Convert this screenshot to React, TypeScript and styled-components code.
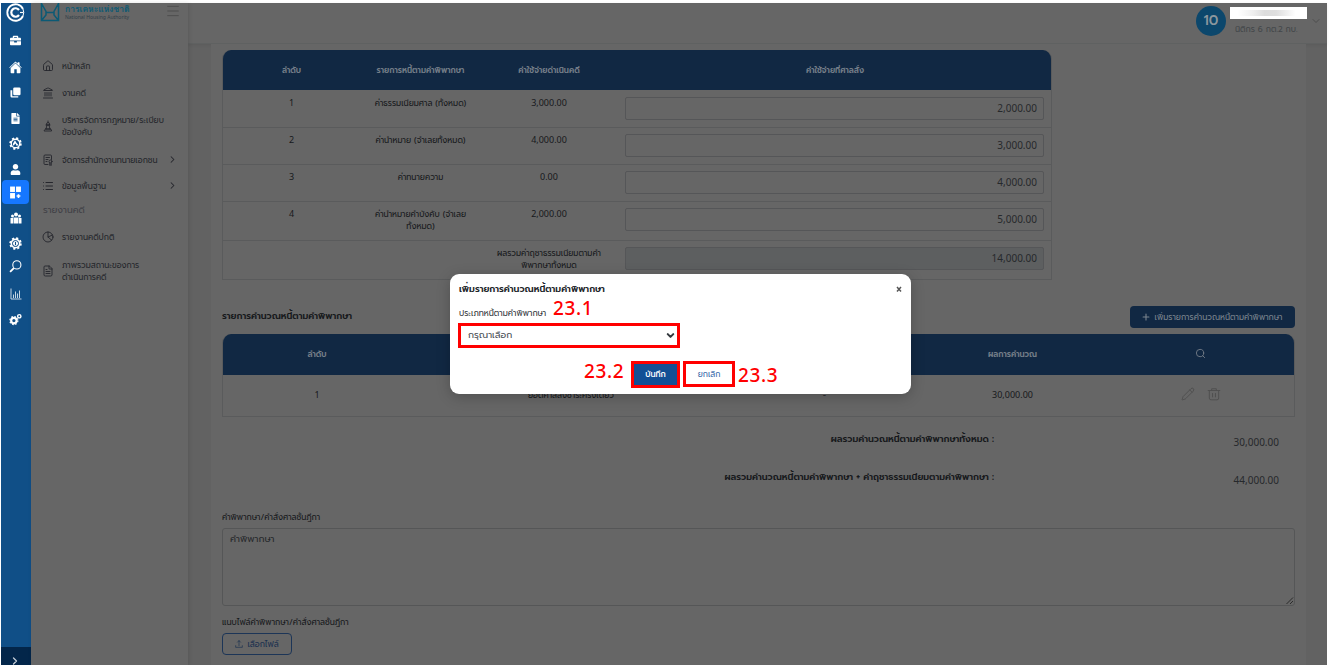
import React from 'react';
import styled, { createGlobalStyle, css } from 'styled-components';
import { FaBriefcase, FaFileAlt, FaUser } from 'react-icons/fa';
import { IoHome } from 'react-icons/io5';
import {
  House, Landmark, List, ChevronRight, ChevronDown, Search, Plus, Pencil,
  FileText, Menu,
} from 'lucide-react';

const Global = createGlobalStyle`
  * { box-sizing: border-box; }
  body { margin: 0; background: #fff; overflow: hidden;
    font-family: Prompt, Kanit, "Noto Sans", "Noto Sans Thai", sans-serif; }
`;

const digits = css`font-family: "Noto Sans", sans-serif;`;

const Page = styled.div`
  position: relative;
  display: flex;
  width: 1329px;
  height: 665px;
  padding: 3px 2px 0 1px;
  overflow: hidden;
`;

/* Rail */
const Rail = styled.nav`
  display: flex;
  flex-direction: column;
  align-items: flex-start;
  width: 30px;
  background: #104f87;
  color: #fff;
  flex: none;
`;
const RailItem = styled.div<{ $h?: number; $active?: boolean }>`
  display: flex;
  align-items: center;
  justify-content: center;
  width: 27px;
  margin-left: 1px;
  height: ${p => p.$h ?? 25.3}px;
  flex: none;
  border-radius: 4px;
  background: ${p => (p.$active ? '#1677ff' : 'transparent')};
`;
const RailToggle = styled.div`
  display: flex;
  justify-content: center;
  align-items: flex-end;
  width: 30px;
  height: 18px;
  margin-top: auto;
  padding-right: 2px;
  background: #03264a;
  color: #c3ccd6;
  overflow: hidden;
  svg { flex: none; margin-bottom: -2px; }
`;

/* Sidebar */
const Sidebar = styled.aside`
  width: 157px;
  flex: none;
  background: #666;
  box-shadow: 1px 0 4px rgba(0, 0, 0, 0.12);
  color: #25262c;
  z-index: 1;
`;
const Brand = styled.div`
  display: flex;
  height: 47px;
  padding: 0 7px 0 9px;
`;
const BrandText = styled.div`
  margin-left: 5px;
  flex: 1;
`;
const BrandThai = styled.div`
  font-family: "Noto Sans", Loma, "Noto Sans Thai Looped", sans-serif;
  font-size: 8.5px;
  line-height: 11px;
  font-weight: 600;
  color: #0b5a75;
  white-space: nowrap;
`;
const BrandEn = styled.div`
  font: 5px/6px "Noto Sans", sans-serif;
  color: #323f49;
  white-space: nowrap;
`;
const Item = styled.div<{ $h: number }>`
  display: flex;
  align-items: center;
  height: ${p => p.$h}px;
  padding: 0 10px 0 11px;
  svg { flex: none; }
`;
const ItemLabel = styled.span`
  flex: 1;
  margin-left: 8px;
  font-size: 8.05px;
  line-height: 12px;
  white-space: pre;
`;
const Section = styled.div`
  height: 21px;
  padding-left: 12px;
  font-size: 9.2px;
  line-height: 21px;
  color: #414147;
`;

/* Main area */
const Main = styled.main`
  flex: 1;
  display: flex;
  flex-direction: column;
  background: #626262;
  min-width: 0;
`;
const TopBar = styled.header`
  display: flex;
  justify-content: flex-end;
  height: 41px;
  flex: none;
  padding: 3px 5px 0 0;
  background: #666;
  border-bottom: 1px solid #5f6161;
  box-shadow: 0 1px 3px rgba(0, 0, 0, 0.08);
`;
const Avatar = styled.div`
  width: 30px;
  height: 30px;
  border-radius: 50%;
  background: #0c476c;
  color: #8c979e;
  font-size: 14px;
  font-weight: 500;
  line-height: 30px;
  text-align: center;
`;
const UserBox = styled.div`
  width: 77px;
  margin-left: 4px;
  padding-top: 1px;
`;
const Redacted = styled.div`
  height: 12px;
  background: linear-gradient(90deg, #fff 10%, #eee 30%, #dcdcdc 45%, #dedede 60%, #f1f1f1 75%, #fff 85%);
  background-size: 100% 6px;
  background-repeat: no-repeat;
  background-position: 0 3px;
  background-color: #fff;
`;
const Role = styled.div`
  padding-left: 5px;
  font-size: 8.1px;
  line-height: 20px;
  color: #43464a;
  white-space: nowrap;
`;
const UserArrow = styled.div`
  margin: 9px 0 0 3px;
  color: #4b4b4b;
  svg { display: block; }
`;

const Panel = styled.section`
  flex: 1;
  width: 1095px;
  margin-left: 23px;
  padding: 6px 11px 0;
  background: #666;
  color: #17191c;
`;

const cols1 = '139px 119px 138px 1fr';
const cols2 = '190px 318px 189px 187px 1fr';

const Table = styled.div<{ $w: number }>`
  width: ${p => p.$w}px;
  border: 1px solid #5a5b5c;
  border-top: 0;
  border-radius: 9px 9px 0 0;
  overflow: hidden;
`;
const Head = styled.div<{ $cols: string; $h: number }>`
  display: grid;
  grid-template-columns: ${p => p.$cols};
  align-items: center;
  height: ${p => p.$h}px;
  margin: 0 -1px;
  padding-bottom: 1px;
  background: #112843;
  color: #747d88;
  font-size: 8px;
  font-weight: 600;
  text-align: center;
  svg { display: block; margin: -2px auto 0; }
`;
const Row = styled.div<{ $cols: string; $h: number; $middle?: boolean }>`
  display: grid;
  grid-template-columns: ${p => p.$cols};
  height: ${p => p.$h}px;
  margin: 0 -1px;
  font-size: 8.1px;
  line-height: 12px;
  text-align: center;
  & + & { border-top: 1px solid #5a5b5c; }
  ${p => p.$middle && css`align-items: center; padding-bottom: 2px;`}
`;
const Cell = styled.div<{ $num?: boolean }>`
  padding-top: 7px;
  white-space: pre;
  ${Row} + ${Row} > & { padding-top: 6px; }
  ${p => p.$num && css`${digits} font-size: 9px;`}
`;
const MidCell = styled.div<{ $num?: boolean }>`
  white-space: pre;
  ${p => p.$num && css`${digits} font-size: 9px;`}
`;
const Amount = styled.div<{ $off?: boolean }>`
  height: 23px;
  margin: 7px 8px 0 7px;
  padding-right: 6px;
  border: 1px solid #555658;
  border-radius: 2px;
  background: ${p => (p.$off ? '#5d5f60' : 'transparent')};
  color: #26292c;
  ${digits}
  font-size: 10px;
  line-height: 21px;
  text-align: right;
  ${Row} + ${Row} > & { margin-top: 6px; }
`;

const SectionHead = styled.div`
  display: flex;
  justify-content: space-between;
  align-items: center;
  height: 22px;
  margin: 26px 0 6px;
`;
const Title = styled.h2`
  margin: 0 0 3px;
  font-size: 9.15px;
  font-weight: 600;
  line-height: 18px;
  white-space: nowrap;
`;
const AddButton = styled.div`
  display: flex;
  align-items: center;
  justify-content: center;
  gap: 4px;
  width: 165px;
  height: 22px;
  padding: 0 2px 1px 0;
  border-radius: 4px;
  background: #112843;
  color: #7b848e;
  font-size: 8.1px;
  white-space: nowrap;
`;
const Actions = styled.div`
  display: flex;
  justify-content: center;
  gap: 12px;
  padding-bottom: 2px;
  color: #505050;
`;
const Totals = styled.div`
  margin-top: 5px;
  height: 76px;
`;
const Total = styled.div`
  display: flex;
  height: 38px;
  align-items: center;
`;
const TotalLabel = styled.div`
  width: 772px;
  padding-bottom: 4px;
  text-align: right;
  font-size: 9.15px;
  font-weight: 600;
  white-space: nowrap;
`;
const TotalValue = styled.div`
  flex: 1;
  padding: 2px 16px 0 0;
  text-align: right;
  ${digits}
  font-size: 10px;
  color: #26292c;
`;
const FieldLabel = styled.div<{ $mt: number }>`
  margin-top: ${p => p.$mt}px;
  height: 16px;
  font-size: 8.1px;
  line-height: 16px;
  white-space: nowrap;
`;
const Area = styled.div`
  display: flex;
  justify-content: space-between;
  height: 78px;
  margin-top: 3px;
  padding: 3px 0 0 7px;
  border: 1px solid #555657;
  border-radius: 3px;
  color: #26292c;
  font-size: 9.4px;
  line-height: 14px;
  svg { align-self: flex-end; }
`;
const FileButton = styled.div`
  display: flex;
  align-items: center;
  justify-content: center;
  gap: 4px;
  width: 70px;
  height: 22px;
  margin-top: 3px;
  border: 1px solid #1c3557;
  border-radius: 4px;
  color: #1a304f;
  font-size: 8.1px;
  white-space: nowrap;
`;

/* Dialog */
const Dialog = styled.div`
  position: absolute;
  left: 450px;
  top: 274px;
  width: 461px;
  height: 120px;
  padding: 7px 9px;
  border-radius: 9px;
  background: #fff;
  box-shadow: 0 3px 14px rgba(0, 0, 0, 0.22);
  color: #212529;
  z-index: 2;
`;
const DialogHead = styled.div`
  display: flex;
  justify-content: space-between;
  height: 17px;
  font-size: 9.15px;
  line-height: 17px;
  font-weight: 600;
`;
const DialogLabel = styled.div`
  margin-top: 8px;
  font-size: 8.1px;
  line-height: 14px;
  color: #33373b;
`;
const Select = styled.div`
  display: flex;
  align-items: center;
  justify-content: space-between;
  width: 222px;
  height: 25px;
  margin: 3px 0 0 -1px;
  padding: 0 1px 0 7px;
  border: 3px solid #f00;
  font-size: 9.4px;
  line-height: 17px;
  color: #4a5056;
`;
const Buttons = styled.div`
  display: flex;
  gap: 3px;
  margin: 13px 0 0 172px;
`;
const DialogButton = styled.div<{ $primary?: boolean }>`
  width: ${p => (p.$primary ? 49 : 52)}px;
  height: ${p => (p.$primary ? 27 : 26)}px;
  border: 3px solid #f00;
  background: ${p => (p.$primary ? '#124f95' : '#fff')};
  color: ${p => (p.$primary ? '#fff' : '#3c6dab')};
  font-size: 8px;
  font-weight: ${p => (p.$primary ? 500 : 400)};
  line-height: 21px;
  text-align: center;
`;
const Callout = styled.div<{ $x: number; $y: number }>`
  position: absolute;
  left: ${p => p.$x}px;
  top: ${p => p.$y}px;
  color: #f00;
  font-family: "Noto Sans", sans-serif;
  font-size: 19px;
  font-weight: 500;
  line-height: 20px;
  letter-spacing: 0.6px;
`;

const White = ({ children, s = 12 }: { children: React.ReactNode; s?: number }) => (
  <svg width={s} height={s} viewBox="0 0 24 24" fill="currentColor">{children}</svg>
);

const Line = ({ children, s = 11, w = 1.8 }: { children: React.ReactNode; s?: number; w?: number }) => (
  <svg width={s} height={s} viewBox="0 0 24 24" fill="none" stroke="currentColor" strokeWidth={w}
    strokeLinecap="round" strokeLinejoin="round">{children}</svg>
);

const Gear = ({ hub }: { hub: React.ReactNode }) => (
  <White s={13}>
    <circle cx="12" cy="12" r="7.5" fill="none" stroke="currentColor" strokeWidth="3.5" />
    <circle cx="12" cy="12" r="10" fill="none" stroke="currentColor" strokeWidth="3" strokeDasharray="4 3.85" />
    {hub}
  </White>
);

const costRows = [
  ['1', 'ค่าธรรมเนียมศาล (ทั้งหมด)', '3,000.00', '2,000.00', 37],
  ['2', 'ค่านำหมาย (จำเลยทั้งหมด)', '4,000.00', '3,000.00', 37],
  ['3', 'ค่าทนายความ', '0.00', '4,000.00', 37],
  ['4', 'ค่านำหมายคำบังคับ (จำเลย\nทั้งหมด)', '2,000.00', '5,000.00', 39],
] as const;

export default function App() {
  return (
    <Page>
      <Global />
      <Rail>
        <RailItem $h={19}>
          <svg width="19" height="19" viewBox="0 0 38 38" fill="none" stroke="#fff">
            <path d="M34 12A16.500 16.500 0 1 0 34 26" strokeWidth="3.6" />
            <path d="M26 14A8.500 8.500 0 1 0 26 24" strokeWidth="4.4" />
            <path d="M34 12Q37 19 34 26" strokeWidth="2" />
            <path d="M28 19H35" strokeWidth="2.4" />
          </svg>
        </RailItem>
        <RailItem $h={37}><FaBriefcase size={11} /></RailItem>
        <RailItem $h={16}><IoHome size={13} /></RailItem>
        <RailItem $h={34}>
          <White s={11}><rect x="7" y="1" width="16" height="17" rx="3" /><path d="M1 7h4v13h13v3H4q-3 0-3-3z" /></White>
        </RailItem>
        <RailItem $h={18}><FaFileAlt size={11} /></RailItem>
        <RailItem $h={32}><Gear hub={<><circle cx="12" cy="12" r="6.5" fill="#104f87" /><path d="M11 6l3 5 4 4-4 1-2-4-4 4-1-3z" /></>} /></RailItem>
        <RailItem $h={21}><FaUser size={11} /></RailItem>
        <RailItem $h={24} $active>
          <White s={13}>
            <rect x="2" y="1" width="9" height="10" /><rect x="13" y="1" width="9" height="10" />
            <rect x="2" y="13" width="9" height="10" /><path d="M16 15h3v2h2v3h-2v2h-3v-2h-2v-3h2z" />
          </White>
        </RailItem>
        <RailItem $h={28}>
          <White s={12}>
            <circle cx="12" cy="5" r="4" /><circle cx="5" cy="8" r="3" /><circle cx="19" cy="8" r="3" />
            <path d="M7 11h10v12H7zM1 12h5v11H1zM18 12h5v11h-5z" />
          </White>
        </RailItem>
        <RailItem $h={23}><Gear hub={<><circle cx="12" cy="12" r="5" fill="#fff" /><circle cx="12" cy="12" r="5.5" fill="none" stroke="#104f87" strokeWidth="1.5" /><path d="M12 9v6" stroke="#104f87" strokeWidth="2" /></>} /></RailItem>
        <RailItem $h={23}>
          <svg width="13" height="13" viewBox="0 0 24 24" fill="none" stroke="#fff" strokeWidth="2">
            <circle cx="14.5" cy="9" r="7.5" /><path d="M9 15l-7 7" strokeWidth="3.4" />
          </svg>
        </RailItem>
        <RailItem $h={31}>
          <svg width="12" height="12" viewBox="0 0 24 24" fill="none" stroke="#c5d4e2" strokeWidth="2">
            <path d="M2 1v21h21M7 20v-7M11 20V7M15 20v-9M19 20V5" />
          </svg>
        </RailItem>
        <RailItem $h={21}>
          <White s={13}>
            <circle cx="9" cy="14" r="5" fill="none" stroke="currentColor" strokeWidth="4" />
            <circle cx="9" cy="14" r="7.5" fill="none" stroke="currentColor" strokeWidth="2" strokeDasharray="3 2.9" />
            <circle cx="19" cy="6" r="3" fill="none" stroke="currentColor" strokeWidth="2.6" />
          </White>
        </RailItem>
        <RailToggle><ChevronRight size={12} strokeWidth={2.6} /></RailToggle>
      </Rail>

      <Sidebar>
        <Brand>
          <svg width="20" height="19" viewBox="0 0 20 19" fill="none" stroke="#0b5a75" strokeWidth="1.5">
            <path d="M1.500 0v17.500h17V0M1.500 0.500L6 8.500V12L1.500 17.500M18.500 0.500L14 8.500V12L18.500 17.500M6 9.500h8" />
          </svg>
          <BrandText>
            <BrandThai>การเคหะแห่งชาติ</BrandThai>
            <BrandEn>National Housing Authority</BrandEn>
          </BrandText>
          <Menu size={16} strokeWidth={1.4} color="#4c4c4c" />
        </Brand>
        <Item $h={32}><House size={12} strokeWidth={1.8} /><ItemLabel>หน้าหลัก</ItemLabel></Item>
        <Item $h={22}><Landmark size={12} strokeWidth={1.8} /><ItemLabel>งานคดี</ItemLabel></Item>
        <Item $h={44}>
          <Line s={12}><path d="M12 2v3M9 8a3 3 0 0 1 6 0v2H9zM8 10h8M10 10l-2 8M14 10l2 8M7 18h10M5 22h14v-2l-2-2H7l-2 2z" /></Line>
          <ItemLabel>{'บริหารจัดการกฎหมาย/ระเบียบ\nข้อบังคับ'}</ItemLabel>
        </Item>
        <Item $h={23}>
          <Line s={12}><path d="M12 21H6a2 2 0 0 1-2-2V4a2 2 0 0 1 2-2h11a2 2 0 0 1 2 2v7M8 7h7M8 11h4M8 15h2" /><circle cx="17" cy="15" r="3" /><path d="M15.500 18v5l1.500-1 1.500 1v-5" /></Line>
          <ItemLabel>จัดการสำนักงานทนายเอกชน</ItemLabel><ChevronRight size={11} strokeWidth={2.2} />
        </Item>
        <Item $h={29}><List size={12} strokeWidth={2} /><ItemLabel>ข้อมูลพื้นฐาน</ItemLabel><ChevronRight size={11} strokeWidth={2.2} /></Item>
        <Section>รายงานคดี</Section>
        <Item $h={32}><Line s={12}><circle cx="12" cy="12" r="10" /><path d="M12 2v10l7.500 6.500M12 12l9-4" /></Line><ItemLabel>รายงานคดีปกติ</ItemLabel></Item>
        <Item $h={36}><FileText size={12} strokeWidth={1.8} /><ItemLabel>{'ภาพรวมสถานะของการ\nดำเนินการคดี'}</ItemLabel></Item>
      </Sidebar>

      <Main>
        <TopBar>
          <Avatar>10</Avatar>
          <UserBox>
            <Redacted />
            <Role>นิติกร 6 กต.2 กบ.</Role>
          </UserBox>
          <UserArrow><ChevronDown size={12} strokeWidth={1.8} /></UserArrow>
        </TopBar>
        <Panel>
          <Table $w={830}>
            <Head $cols={cols1} $h={40}>
              <span>ลำดับ</span><span>รายการหนี้ตามคำพิพากษา</span><span>ค่าใช้จ่ายดำเนินคดี</span><span>ค่าใช้จ่ายที่ศาลสั่ง</span>
            </Head>
            {costRows.map(([n, name, cost, amount, h]) => (
              <Row key={n} $cols={cols1} $h={h}>
                <Cell $num>{n}</Cell><Cell>{name}</Cell><Cell $num>{cost}</Cell><Amount>{amount}</Amount>
              </Row>
            ))}
            <Row $cols={cols1} $h={39}>
              <Cell /><Cell /><Cell>{'ผลรวมค่าฤชาธรรมเนียมตามคำ\nพิพากษาทั้งหมด'}</Cell><Amount $off>14,000.00</Amount>
            </Row>
          </Table>

          <SectionHead>
            <Title>รายการคำนวณหนี้ตามคำพิพากษา</Title>
            <AddButton><Plus size={10} strokeWidth={2.6} />เพิ่มรายการคำนวณหนี้ตามคำพิพากษา</AddButton>
          </SectionHead>

          <Table $w={1073}>
            <Head $cols={cols2} $h={41}>
              <span>ลำดับ</span><span /><span /><span>ผลการคำนวณ</span>
              <span><Search size={11} strokeWidth={2} /></span>
            </Head>
            <Row $cols={cols2} $h={41} $middle>
              <MidCell $num>1</MidCell><MidCell>ยอดศาลสั่งชำระครั้งเดียว</MidCell><MidCell>-</MidCell>
              <MidCell $num>30,000.00</MidCell>
              <Actions>
                <Pencil size={14} strokeWidth={1.6} />
                <Line s={14} w={1.7}><path d="M2 6h20M8 6V3h8v3M4 6v13a3 3 0 0 0 3 3h10a3 3 0 0 0 3-3V6M9.500 11v6M14.500 11v6" /></Line>
              </Actions>
            </Row>
          </Table>

          <Totals>
            <Total><TotalLabel>ผลรวมคำนวณหนี้ตามคำพิพากษาทั้งหมด :</TotalLabel><TotalValue>30,000.00</TotalValue></Total>
            <Total><TotalLabel>ผลรวมคำนวณหนี้ตามคำพิพากษา + ค่าฤชาธรรมเนียมตามคำพิพากษา :</TotalLabel><TotalValue>44,000.00</TotalValue></Total>
          </Totals>

          <FieldLabel $mt={11}>คำพิพากษา/คำสั่งศาลชั้นฎีกา</FieldLabel>
          <Area>
            คำพิพากษา
            <svg width="8" height="8" viewBox="0 0 8 8" stroke="#2b2b2b" strokeWidth="1"><path d="M0.500 7L7 0.500M4 7l3-3" /></svg>
          </Area>
          <FieldLabel $mt={8}>แนบไฟล์คำพิพากษา/คำสั่งศาลชั้นฎีกา</FieldLabel>
          <FileButton>
            <Line s={8} w={2}><path d="M2 17v5h20v-5M12 17V2M7.500 6.500L12 2l4.500 4.500" /></Line>
            เลือกไฟล์
          </FileButton>
        </Panel>
      </Main>

      <Dialog>
        <DialogHead>
          <span>เพิ่มรายการคำนวณหนี้ตามคำพิพากษา</span>
          <svg width="6" height="17" viewBox="0 0 6 17" stroke="#555" strokeWidth="1.5"><path d="M1 6l4 4.500M5 6l-4 4.500" /></svg>
        </DialogHead>
        <DialogLabel>ประเภทหนี้ตามคำพิพากษา</DialogLabel>
        <Select>กรุณาเลือก<ChevronDown size={11} strokeWidth={4.5} color="#33383d" /></Select>
        <Buttons>
          <DialogButton $primary>บันทึก</DialogButton>
          <DialogButton>ยกเลิก</DialogButton>
        </Buttons>
        <Callout $x={103} $y={24}>23.1</Callout>
        <Callout $x={134} $y={87}>23.2</Callout>
        <Callout $x={288} $y={91}>23.3</Callout>
      </Dialog>
    </Page>
  );
}
